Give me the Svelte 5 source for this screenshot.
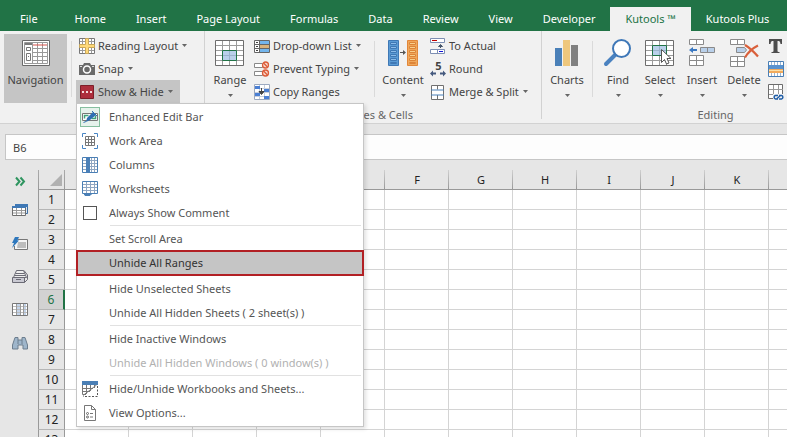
<!-- Excel window with the Kutools ribbon and the Show & Hide menu opened -->

<script>
    const tabs = ["File", "Home", "Insert", "Page Layout", "Formulas", "Data", "Review", "View", "Developer", "Kutools ™", "Kutools Plus"];

    const menu = [
        { icon: "editbar", label: "Enhanced Edit Bar", on: true },
        { icon: "workarea", label: "Work Area" },
        { icon: "columns", label: "Columns" },
        { icon: "worksheets", label: "Worksheets" },
        { check: true, label: "Always Show Comment" },
        { line: true },
        { label: "Set Scroll Area" },
        { label: "Unhide All Ranges", picked: true },
        { line: true },
        { label: "Hide Unselected Sheets" },
        { label: "Unhide All Hidden Sheets ( 2 sheet(s) )" },
        { line: true },
        { label: "Hide Inactive Windows" },
        { label: "Unhide All Hidden Windows ( 0 window(s) )", disabled: true },
        { line: true },
        { icon: "hidebooks", label: "Hide/Unhide Workbooks and Sheets..." },
        { icon: "options", label: "View Options..." }
    ];

    const side = ["sheets", "autotext", "stack", "colpane", "binoculars"];
    const cols = "ABCDEFGHIJKL".split("");
    const rows = Array.from({ length: 13 }, (_, i) => i + 1);

    let activeTab = $state("Kutools ™");
    let activeRow = $state(6);
    let open = $state(true);
    let alwaysComment = $state(false);
    let cell = $state("B6");
    let formula = $state("");
</script>

{#snippet arrow()}
    <svg class="arrow" width="5" height="3" viewBox="0 0 5 3"><path d="M0 0h5L2.500 3z" fill="currentColor" /></svg>
{/snippet}

<!-- 16px icons -->
{#snippet icon(name)}
    <svg class="icon" width="16" height="16" viewBox="0 0 16 16" fill="none" aria-hidden="true">
        {#if name === "reading"}
            <path d="M.5.5h15v15H.5z" fill="#fff" stroke="#777" />
            <path d="M3.500 1v14M12.500 1v14M1 3.500h14M1 12.500h14" stroke="#999" />
            <path d="M6.500.5h3v6h6v3h-6v6h-3v-6h-6v-3h6z" fill="#ffd978" stroke="#c9a75a" />
        {:else if name === "snap"}
            <path d="M0 4h4l1-2h6l1 2h4v10H0z" fill="#6a6a6a" />
            <circle cx="8" cy="8.500" r="3.500" fill="#6a6a6a" stroke="#fff" stroke-width="1.500" />
            <path d="M1 5.500h2M13 5.500h2" stroke="#ddd" />
        {:else if name === "showhide"}
            <path d="M1.500 1.500h13v13h-13z" fill="#ad2e3c" stroke="#7c2029" />
            <path d="M3 7h2v2H3zM7 7h2v2H7zM11 7h2v2h-2z" fill="#f3dcdc" />
        {:else if name === "dropdown"}
            <path d="M.5 2.500h15v12H.5z" fill="#fff" stroke="#666" />
            <path d="M6 3h9v3H6zM6 11h9v3H6z" fill="#73b5ec" />
            <path d="M6 7h9v3H6z" fill="#d9b27a" />
            <path d="M5.500 3v11M0 6.500h15M0 10.500h15" stroke="#666" />
            <path d="M2 4.500h2M2 8.500h2M2 12.500h2" stroke="#444" />
        {:else if name === "prevent"}
            <path d="M.5 2.500h8v4h-8zM.5 10.500h8v4h-8z" fill="#fff" stroke="#888" />
            <circle cx="11.500" cy="4" r="3" fill="#f8d5c8" stroke="#dc5b38" stroke-width="1.300" />
            <circle cx="11.500" cy="12" r="3" fill="#f8d5c8" stroke="#dc5b38" stroke-width="1.300" />
            <path d="M9.500 2l4 4M9.500 10l4 4" stroke="#dc5b38" stroke-width="1.300" />
        {:else if name === "copy"}
            <path d="M.5.500h15v15H.5z" fill="#fff" stroke="#9ba9c0" />
            <path d="M5.500 1v14M10.500 1v14M1 4.500h14M1 8.500h14M1 12.500h14" stroke="#c8d0dd" />
            <path d="M1 2h5v3H1zM10 5h5v3h-5zM1 9h5v3H1zM10 12h5v3h-5z" fill="#4a7fd4" />
            <path d="M7.500 4v6M5 7.500l2.500 3 2.500-3z" stroke="#444" fill="#444" />
        {:else if name === "actual"}
            <path d="M.5.500h14v4H.5zM.5 11.500h14v4H.5z" fill="#fff" stroke="#7d8fb3" />
            <path d="M7.500 12v3" stroke="#7d8fb3" />
            <path d="M2 2.500h5" stroke="#c00000" />
            <path d="M9 13.500h4" stroke="#1414d8" />
            <path d="M8.500 8.500l2-2 2 2zM10.500 8v2" fill="#44546a" stroke="#44546a" />
        {:else if name === "round"}
            <text x="8.500" y="9" text-anchor="middle" font-size="11" font-weight="bold" fill="#444">5</text>
            <path d="M0 12.500l3-3v2h3v2H3v2zM16 12.500l-3-3v2h-3v2h3v2z" fill="#44597e" />
        {:else if name === "merge"}
            <path d="M1.500 1.500h12v14h-12z" fill="#fff" stroke="#707070" />
            <path d="M7.500 1.500v4M7.500 11v4" stroke="#707070" />
            <path d="M1 6h13M1 11h13" stroke="#4a80b8" />
        {:else if name === "text"}
            <path d="M1 1h13v5h-1.500c-.3-2.500-.8-3-3-3v10c0 .8.500 1 2 1v1h-8v-1c1.500 0 2-.2 2-1V3c-2.200 0-2.700.5-3 3H1z" fill="#4d4d4d" />
        {:else if name === "band"}
            <path d="M.5.500h15v15H.5z" fill="#fff" stroke="#4a7fb5" />
            <path d="M3.500 1v14M6.500 1v14M9.500 1v14M12.500 1v14" stroke="#9ab6d4" />
            <path d="M1 4h14v4H1z" fill="#5a93cf" />
            <path d="M1 8h14v4H1z" fill="#f2ab5d" />
            <path d="M1 9.500h14" stroke="#fde1a8" />
        {:else if name === "linkcell"}
            <path d="M.5.500h14v14H.5z" fill="#fff" stroke="#6d6d6d" />
            <path d="M5.500 1v14M10.500 1v14M1 5.500h14M1 10.500h14" stroke="#999" />
            <rect x="5" y="10" width="11" height="6" fill="#f0f0f0" />
            <path d="M10 11.500H7.500a1.800 1.800 0 000 3.500H10M11 11.500h2.500a1.800 1.800 0 010 3.500H11M9 14.500l3-2.500" stroke="#1f5ea8" stroke-width="1.500" />
        {:else if name === "editbar"}
            <path d="M.5 4.500h15v7H.5z" fill="#fff" stroke="#777" />
            <path d="M2.500 9.500v-3h4M13.500 6.500v3h-4" stroke="#3fa27a" stroke-width="1.500" />
            <path d="M4 13l1-4 6-6 3 3-6 5z" fill="#2f6fb2" />
            <path d="M1.500 13.500l2.500-1M10 2l5 5" stroke="#2f6fb2" />
        {:else if name === "workarea"}
            <path d="M.5 4V.5H4M12 .5h3.500V4M15.500 12v3.500H12M4 15.500H.5V12" stroke="#4a86c5" />
            <path d="M3.500 3.500h9v9h-9zM3 6.500h10M3 9.500h10M6.500 3v10M9.500 3v10" stroke="#777" />
        {:else if name === "columns"}
            <path d="M.5.500h15v15H.5z" fill="#fff" stroke="#4a7fb5" />
            <path d="M1 3.500h14M1 6.500h14M1 9.500h14M1 12.500h14M9.500 1v14M12.500 1v14" stroke="#8fa6c2" />
            <path d="M4 0h4v16H4z" fill="#4a80b8" />
        {:else if name === "worksheets"}
            <path d="M.5.500h15v12H.5z" fill="#fff" stroke="#4a7fb5" />
            <path d="M1 3.500h14M1 6.500h14M1 9.500h14M4.500 1v11M8.500 1v11M12.500 1v11" stroke="#8fa6c2" />
            <path d="M2 12.500l1 2h5l2-2" fill="#4a7fb5" stroke="#4a7fb5" />
        {:else if name === "hidebooks"}
            <path d="M1 4h14v6l-5 5H1z" fill="#fff" />
            <path d="M0 0h16v4H0z" fill="#4a7fb5" />
            <path d="M.5 4v9.500H4M1 7.500h10M1 10.500h7M4.500 4v9M8.500 4v6M12.500 4v3M1 14.500L14.500 4" stroke="#777" />
            <path d="M15.500 5v10.500H1" stroke="#555" stroke-dasharray="2 1.500" />
        {:else if name === "options"}
            <path d="M2.500.500h7l4 4v11h-11zM9.500.500v4h4" fill="#fff" stroke="#777" />
            <circle cx="5.500" cy="8.500" r="1" stroke="#666" />
            <circle cx="5.500" cy="12" r="1" stroke="#666" />
            <path d="M8 8.500h3M8 12h3" stroke="#777" />
        {:else if name === "sheets"}
            <path d="M3.500 1.500h12v9h-12z" fill="#dce8f4" stroke="#3f6fa3" />
            <path d="M3 1h13v3H3z" fill="#3f78b5" />
            <path d="M.5 3.500h13v9H.5z" fill="#fff" stroke="#6d6d6d" />
            <path d="M0 3h14v2H0z" fill="#3f78b5" />
            <path d="M1 7.500h12M1 10h12M4.500 5v7M9.500 5v7" stroke="#999" />
        {:else if name === "autotext"}
            <path d="M6 3.500h9.500v10h-13V10" stroke="#777" fill="#f5f5f5" />
            <path d="M6 6h8v6H5z" fill="#bdbdbd" />
            <path d="M3 1h4L5.500 4.500H7L0 12l2-5H0z" fill="#2f78bd" />
        {:else if name === "stack"}
            <path d="M4.500 1.500h7l3 7h-13z" fill="#eee" stroke="#6b6b75" />
            <path d="M3.500 4.500h9M2.500 6.500h11" stroke="#6b6b75" />
            <path d="M.5 8.500h12v5H.5z" fill="#c9c9d2" stroke="#6b6b75" />
            <path d="M12.500 13.500l3-3V6l-3.500-4.500" stroke="#6b6b75" />
            <path d="M4 10.500h5" stroke="#6b6b75" />
        {:else if name === "colpane"}
            <path d="M.5 1.500h15v12H.5z" fill="#fff" stroke="#777" />
            <path d="M5 2h3v11H5zM11 2h3v11h-3z" fill="#c3d4ea" />
            <path d="M1 4.500h14M1 7.500h14M1 10.500h14" stroke="#bbb" />
            <path d="M4.500 2v11M8.500 2v11M11.500 2v11" stroke="#9a9a9a" />
        {:else if name === "binoculars"}
            <path d="M3 2.500h3v2.500h4V2.500h3l2.500 7.500v4h-4.500v-4h-5v4H.5v-4z" fill="#9fb6cb" stroke="#6d7e8e" />
            <path d="M6 5v4M10 5v4" stroke="#6d7e8e" />
        {/if}
    </svg>
{/snippet}

<!-- 30px icons for the tall buttons -->
{#snippet bigIcon(name)}
    <svg class="big-icon" width="30" height="28" viewBox="0 0 30 28" fill="none" aria-hidden="true">
        {#if name === "navigation"}
            <path d="M1.500 1.500h27v25h-27z" fill="#fff" stroke="#6a6a6a" />
            <path d="M4 4h8v2H4z" fill="#7a7a7a" />
            <path d="M3.500 3.500h23v21h-23zM11.500 4v20M16.500 4v20M21.500 4v20M12 9.500h14M12 13.500h14M12 17.500h14M12 21.500h14" stroke="#999" />
            <path d="M12 6h14" stroke="#d9534a" />
            <path d="M5.500 8.500h4v3h-4zM5.500 14.500h4v7h-4zM7 17.500h1" stroke="#777" />
        {:else if name === "range" || name === "select"}
            <path d="M.5 1.500h28v25H.5z" fill="#fff" stroke="#6d6d6d" />
            <path d="M7.500 2v24M14.500 2v24M21.500 2v24M1 6.500h27M1 11.500h27M1 16.500h27M1 21.500h27" stroke="#9b9b9b" />
            {#if name === "range"}
                <path d="M7.500 11.500h14v10h-14z" fill="#b9d0ea" />
                <path d="M14.500 11v10M8 16.500h13" stroke="#9bb3cc" />
                <path d="M7.500 11.500h14v10h-14z" stroke="#217346" />
            {:else}
                <path d="M7.500 6.500h14v10h-14z" fill="#b9d0ea" />
                <path d="M14.500 7v9M8 11.500h13" stroke="#9bb3cc" />
                <path d="M7.500 6.500h14v10h-14z" stroke="#217346" />
                <path d="M16.500 10.500v13l3-3 2 4.500 2.500-1-2-4.500h4z" fill="#fff" stroke="#555" />
            {/if}
        {:else if name === "content"}
            <path d="M.5 1.500h10v25H.5z" fill="#5b9bd5" stroke="#3f78b5" />
            <path d="M2.500 3.500h6v2h-6zM2.500 7.500h6v2h-6zM2.500 11.500h6v2h-6zM2.500 15.500h6v2h-6zM2.500 19.500h6v2h-6zM2.500 23.500h6v1h-6z" fill="#8bbbe8" stroke="#3f78b5" />
            <path d="M19.500 1.500h10v25h-10z" fill="#f0a85c" stroke="#e2873a" />
            <path d="M21.500 3.500h6v2h-6zM21.500 7.500h6v2h-6zM21.500 11.500h6v2h-6zM21.500 15.500h6v2h-6zM21.500 19.500h6v2h-6zM21.500 23.500h6v1h-6z" fill="#f8d08d" stroke="#dd8438" />
            <path d="M12 13.500h4" stroke="#555" />
            <path d="M15 11l3 2.500-3 2.500z" fill="#555" />
        {:else if name === "charts"}
            <path d="M3 9h7v18H3z" fill="#4a80b8" />
            <path d="M11 1h7v26h-7z" fill="#eec77d" />
            <path d="M19 6h7v21h-7z" fill="#808080" />
        {:else if name === "find"}
            <path d="M12 16l-9 9" stroke="#4a82c0" stroke-width="4" stroke-linecap="round" />
            <circle cx="18.500" cy="9.500" r="8.500" fill="#fff" stroke="#3f78b8" stroke-width="2" />
        {:else if name === "insert"}
            <path d="M2.500.500h14v5h-14zM9.500.500v5M2.500 16.500h14v10h-14zM2.500 21.500h14M9.500 16.500v10" fill="#fff" stroke="#8a8a8a" />
            <path d="M13.500 8.500h14v5h-14z" fill="#b9d0ea" stroke="#8a8a8a" />
            <path d="M20.500 8.500v5" stroke="#8a8a8a" />
            <path d="M2 11l4-3v2h4v2H6v2z" fill="#3a78c2" />
        {:else if name === "delete"}
            <path d="M1.500.500h14v5h-14zM8.500.500v5M1.500 17.500h14v10h-14zM1.500 22.500h14M8.500 17.500v10" fill="#fff" stroke="#8a8a8a" />
            <path d="M7.500 8.500h8l2 2.500-2 2.500h-8z" fill="#b9d0ea" stroke="#8a8a8a" />
            <path d="M16 6c5 3 9 7 13 11.500M29 6.500c-6 3-10 7-13 12" stroke="#d9603b" stroke-width="2.200" />
        {/if}
    </svg>
{/snippet}

{#snippet big(name, label, hasArrow)}
    <button class="big {name}" class:active={!hasArrow}>
        {@render bigIcon(name)}
        <span>{label}</span>
        {#if hasArrow}{@render arrow()}{/if}
    </button>
{/snippet}

{#snippet small(name, label, hasArrow)}
    <button class="small">
        {@render icon(name)}
        <span>{label}</span>
        {#if hasArrow}{@render arrow()}{/if}
    </button>
{/snippet}

<div class="window">
    <nav class="tabs">
        {#each tabs as tab}
            <button class:active={tab === activeTab} onclick={() => (activeTab = tab)}>{tab}</button>
        {/each}
    </nav>

    <div class="ribbon">
        <div class="group view">
            <div class="tools">
                {@render big("navigation", "Navigation", false)}
                <div class="divider"></div>
                <div class="stack">
                    {@render small("reading", "Reading Layout", true)}
                    {@render small("snap", "Snap", true)}
                    <div class="dropdown">
                        <button class="small active" onclick={() => (open = !open)}>
                            {@render icon("showhide")}
                            <span>Show &amp; Hide</span>
                            {@render arrow()}
                        </button>

                        <!-- show & hide menu -->
                        {#if open}
                            <div class="menu">
                                {#each menu as item}
                                    {#if item.line}
                                        <hr />
                                    {:else if item.check}
                                        <label class="item">
                                            <span class="slot"><input type="checkbox" bind:checked={alwaysComment} /></span>
                                            {item.label}
                                        </label>
                                    {:else}
                                        <button class="item" class:picked={item.picked} disabled={item.disabled}>
                                            <span class="slot" class:on={item.on}>
                                                {#if item.icon}{@render icon(item.icon)}{/if}
                                            </span>
                                            {item.label}
                                        </button>
                                    {/if}
                                {/each}
                            </div>
                        {/if}
                    </div>
                </div>
            </div>
            <div class="caption"></div>
        </div>

        <div class="group ranges">
            <div class="tools">
                {@render big("range", "Range", true)}
                <div class="stack lists">
                    {@render small("dropdown", "Drop-down List", true)}
                    {@render small("prevent", "Prevent Typing", true)}
                    {@render small("copy", "Copy Ranges", false)}
                </div>
                <div class="divider"></div>
                {@render big("content", "Content", true)}
                <div class="stack">
                    {@render small("actual", "To Actual", false)}
                    {@render small("round", "Round", false)}
                    {@render small("merge", "Merge & Split", true)}
                </div>
            </div>
            <div class="caption">Ranges &amp; Cells</div>
        </div>

        <div class="group editing">
            <div class="tools">
                {@render big("charts", "Charts", true)}
                <div class="divider"></div>
                {@render big("find", "Find", true)}
                {@render big("select", "Select", true)}
                {@render big("insert", "Insert", true)}
                {@render big("delete", "Delete", true)}
                <div class="stack">
                    <button class="small" aria-label="Text">{@render icon("text")}</button>
                    <button class="small" aria-label="Shading">{@render icon("band")}</button>
                    <button class="small" aria-label="Link">{@render icon("linkcell")}</button>
                </div>
            </div>
            <div class="caption">Editing</div>
        </div>
    </div>

    <div class="formula-bar">
        <input class="name-box" aria-label="Name box" bind:value={cell} />
        <input class="formula" aria-label="Formula" bind:value={formula} />
    </div>

    <div class="body">
        <aside>
            <button class="expand" aria-label="Expand">
                <svg width="10" height="9" viewBox="0 0 10 9" fill="none"><path d="M1 .5l3.500 4L1 8.500M5.500.500l3.500 4-3.500 4" stroke="#2f9560" stroke-width="2" /></svg>
            </button>
            {#each side as name}
                <button aria-label={name}>{@render icon(name)}</button>
            {/each}
        </aside>

        <div class="sheet">
            <table>
                <thead>
                    <tr>
                        <th class="corner"><svg width="12" height="12" viewBox="0 0 12 12"><path d="M12 0v12H0z" fill="#b1b1b1" /></svg></th>
                        {#each cols as col}
                            <th>{col}</th>
                        {/each}
                    </tr>
                </thead>
                <tbody>
                    {#each rows as row}
                        <tr>
                            <th class:current={row === activeRow} onclick={() => (activeRow = row)}>{row}</th>
                            {#each cols as col}
                                <td></td>
                            {/each}
                        </tr>
                    {/each}
                </tbody>
            </table>
        </div>
    </div>
</div>

<style>
    :global(body) {
        margin: 0;
    }

    .window {
        height: 100vh;
        display: flex;
        flex-direction: column;
        overflow: hidden;
        background: #e6e6e6;
        color: #444;
        font-family: "Noto Sans", "Open Sans", sans-serif;
        font-size: 11px;
        line-height: 16px;
    }

    button {
        margin: 0;
        padding: 0;
        border: none;
        background: none;
        color: inherit;
        font: inherit;
        white-space: nowrap;
    }

    svg {
        display: block;
        flex: none;
        overflow: visible;
    }

    /* tabs */
    .tabs {
        display: flex;
        flex: none;
        height: 31px;
        padding-top: 7px;
        box-sizing: border-box;
        background: #217346;
    }

    .tabs button {
        padding: 0 15px;
        color: #fff;
    }

    .tabs button:first-child {
        padding: 0 22px 0 20px;
    }

    .tabs button.active {
        background: #f1f1f1;
        color: #217346;
    }

    /* ribbon */
    .ribbon {
        display: flex;
        flex: none;
        height: 92px;
        background: #f1f1f1;
        border-bottom: 1px solid #d2d2d2;
    }

    .group {
        display: flex;
        flex: none;
        flex-direction: column;
        box-sizing: border-box;
        padding: 3px 0 0 4px;
        margin-bottom: 4px;
        border-right: 1px solid #d2d2d2;
    }

    .view {
        width: 205px;
    }

    .ranges {
        width: 337px;
    }

    .editing {
        width: 344px;
    }

    .tools {
        display: flex;
        flex: none;
        height: 70px;
    }

    .caption {
        margin-top: 3px;
        text-align: center;
        color: #666;
    }

    .divider {
        width: 1px;
        margin: 7px 4px;
        background: #dadada;
    }

    .big {
        display: flex;
        flex: none;
        flex-direction: column;
        align-items: center;
        width: 42px;
        padding-top: 5px;
    }

    .big.active {
        width: 63px;
        height: 69px;
        background: #c5c5c5;
    }

    .big.content {
        width: 48px;
    }

    .big span {
        margin: 5px 0 6px;
    }

    .arrow {
        color: #666;
    }

    .stack {
        display: flex;
        flex-direction: column;
        align-items: flex-start;
    }

    .lists {
        width: 119px;
    }

    .small {
        display: flex;
        align-items: center;
        gap: 3px;
        height: 23px;
        padding: 0 7px 0 3px;
    }

    .small .arrow {
        margin-left: 1px;
    }

    .small.active {
        background: #c5c5c5;
    }

    .dropdown {
        position: relative;
    }

    /* menu */
    .menu {
        position: absolute;
        top: 100%;
        left: 0;
        z-index: 10;
        width: 286px;
        padding: 1px 0;
        background: #fff;
        border: 1px solid #c6c6c6;
        box-shadow: 2px 2px 4px rgba(0, 0, 0, 0.12);
    }

    .item {
        display: flex;
        align-items: center;
        gap: 9px;
        width: 100%;
        height: 24px;
        padding-left: 3px;
        box-sizing: border-box;
        color: #555;
    }

    .item:disabled {
        color: #b1b1b1;
    }

    .item.picked {
        background: #c5c5c5;
        color: #333;
        outline: 2px solid #b22024;
        outline-offset: -1px;
    }

    .slot {
        display: flex;
        align-items: center;
        justify-content: center;
        width: 20px;
        height: 20px;
        box-sizing: border-box;
    }

    .slot.on {
        background: #e6f2ec;
        border: 1px solid #86bfa0;
    }

    .slot input {
        appearance: none;
        width: 14px;
        height: 14px;
        margin: 0;
        background: #fff;
        border: 1px solid #555;
    }

    .slot input:checked {
        background: #217346;
    }

    hr {
        height: 1px;
        margin: 0 2px 1px 33px;
        border: none;
        background: #e1e1e1;
    }

    /* name box and formula bar */
    .formula-bar {
        display: flex;
        flex: none;
        gap: 8px;
        padding: 10px 0 0 5px;
    }

    .formula-bar input {
        height: 26px;
        box-sizing: border-box;
        padding: 0 7px;
        border: 1px solid #c6c6c6;
        border-radius: 0;
        outline: none;
        background: #fdfdfd;
        color: #444;
        font: inherit;
    }

    .name-box {
        width: 120px;
    }

    .formula-bar .formula {
        flex: 1;
        border-right: none;
    }

    /* side pane and sheet */
    .body {
        display: flex;
        flex: 1;
        min-height: 0;
    }

    aside {
        display: flex;
        flex: none;
        flex-direction: column;
        align-items: center;
        gap: 17px;
        width: 38px;
        padding: 17px 0 0 2px;
        box-sizing: border-box;
    }

    .sheet {
        flex: 1;
        overflow: hidden;
        background: #fff;
    }

    table {
        width: max-content;
        table-layout: fixed;
        border-spacing: 0;
    }

    th,
    td {
        width: 64px;
        height: 20px;
        padding: 0;
        box-sizing: border-box;
        border-right: 1px solid #d4d4d4;
        border-bottom: 1px solid #d4d4d4;
        background: #fff;
    }

    th {
        color: #222;
        font-weight: normal;
    }

    thead th {
        height: 30px;
        padding-top: 11px;
        border-right: none;
        border-bottom-color: #999;
        background: linear-gradient(#d0d0d0, #999) right bottom / 1px 19px no-repeat #e6e6e6;
    }

    thead th.corner {
        width: 27px;
        background: linear-gradient(#aaa, #999) right bottom / 1px 19px no-repeat, linear-gradient(#aaa, #999) left bottom / 1px 19px no-repeat #e6e6e6;
    }

    .corner svg {
        margin-left: 12px;
    }

    tbody th {
        width: 27px;
        border-left: 1px solid #999;
        border-right-color: #999;
        border-bottom-color: #b5b5b5;
        background: #e6e6e6;
        font-size: 12px;
    }

    tbody th.current {
        border-right: 2px solid #217346;
        background: #d2d2d2;
        color: #217346;
    }
</style>
